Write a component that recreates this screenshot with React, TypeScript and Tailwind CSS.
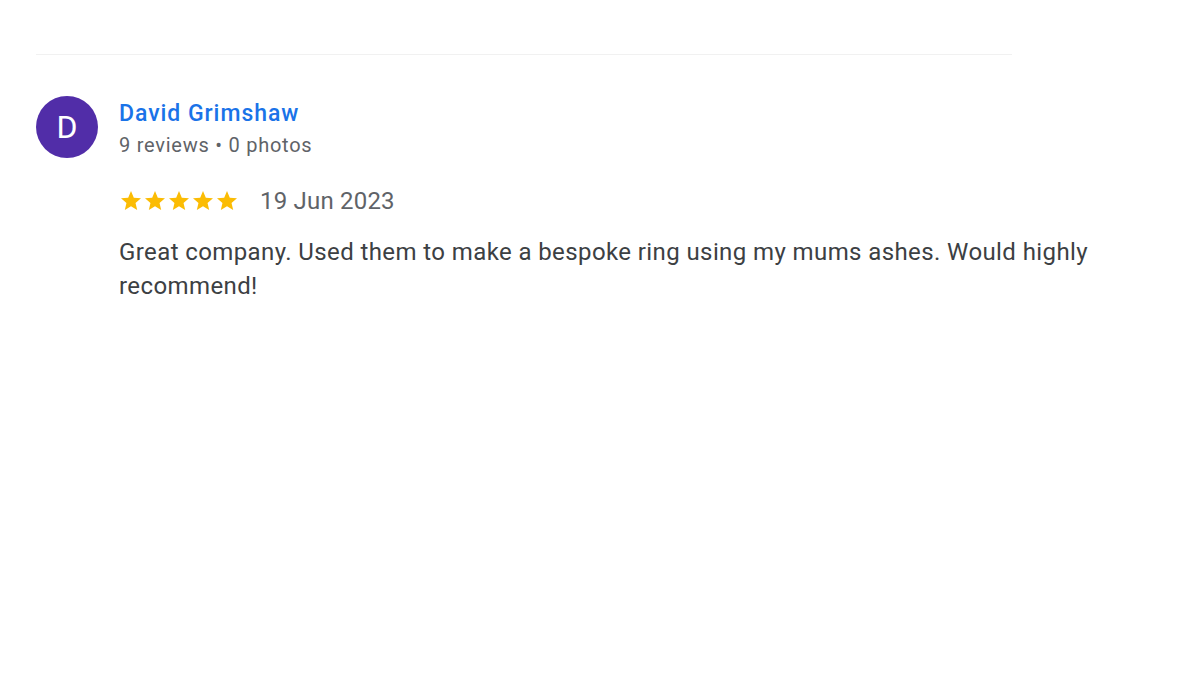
const review = {
  author: "David Grimshaw",
  initial: "D",
  reviews: 9,
  photos: 0,
  rating: 5,
  date: "19 Jun 2023",
  text: "Great company. Used them to make a bespoke ring using my mums ashes. Would highly recommend!",
};

function StarIcon() {
  return (
    <svg viewBox="0 0 24 24" className="h-[24px] w-[24px]" fill="#fbbc04">
      <path d="M12 17.27 18.18 21l-1.64-7.03L22 9.24l-7.19-.61L12 2 9.19 8.63 2 9.24l5.46 4.73L5.82 21z" />
    </svg>
  );
}

export default function App() {
  return (
    <div className="min-h-screen bg-white font-['Roboto',sans-serif]">
      <div className="px-[36px] pt-[54px]">
        <div className="w-[976px] border-t border-[#f1f1f1]" />
        <div className="mt-[41px] flex gap-[21px]">
          <div className="flex h-[62px] w-[62px] shrink-0 items-center justify-center rounded-full bg-[#512da8] text-[32px] text-white">
            {review.initial}
          </div>
          <div className="min-w-0 flex-1 pr-[40px]">
            <div className="mt-[2px] text-[23px] font-medium leading-[32px] tracking-[0.95px] text-[#1a73e8]">
              {review.author}
            </div>
            <div className="text-[20px] leading-[30px] tracking-[0.75px] text-[#5f6368]">
              {review.reviews} reviews • {review.photos} photos
            </div>
            <div className="mt-[25px] flex items-center gap-[21px]">
              <div className="flex">
                {Array.from({ length: review.rating }).map((_, i) => (
                  <StarIcon key={i} />
                ))}
              </div>
              <span className="text-[24px] leading-[32px] tracking-[0.2px] text-[#5f6368]">{review.date}</span>
            </div>
            <p className="mt-[18px] max-w-[1000px] text-[24px] leading-[34px] tracking-[0.4px] text-[#3c4043]">
              {review.text}
            </p>
          </div>
        </div>
      </div>
    </div>
  );
}
